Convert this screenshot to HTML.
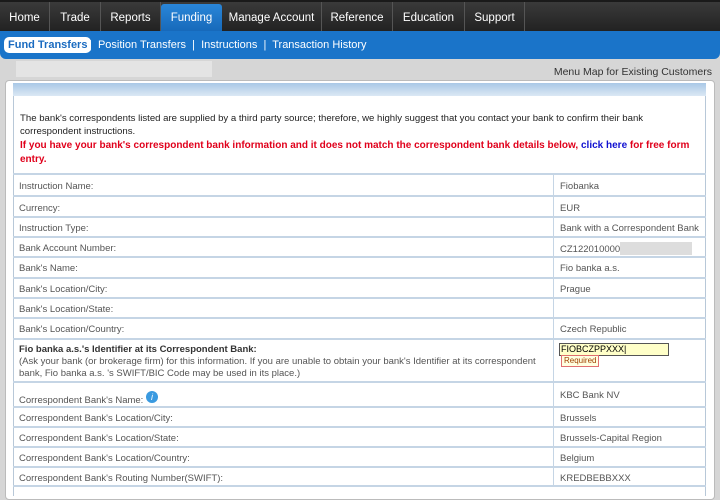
<!DOCTYPE html>
<html><head><style>
*{margin:0;padding:0;box-sizing:border-box}
body{width:720px;height:489px;overflow:hidden;background:#d6d6d6;font-family:"Liberation Sans",sans-serif;position:relative}
.nav{position:absolute;left:0;top:0;width:720px;height:31px;background:linear-gradient(#3a3a3a,#222);border-top:2px solid #1a1a1a}
.nav span{position:absolute;top:0;height:29px;line-height:32px;color:#fff;font-size:11.5px;border-right:1px solid #555;text-align:center}
.nav .on{background:linear-gradient(#2a86d8,#1567b8);border-radius:3px 3px 0 0;top:2px;height:29px;line-height:28px;border:none}
.sub{position:absolute;left:0;top:31px;width:720px;height:28px;background:#1a74c9;border-radius:0 0 6px 6px}
.sub .pill{position:absolute;left:4px;top:6px;height:16px;padding:0 4px;background:#fff;border-radius:5px;color:#1a6bc0;font-weight:bold;font-size:11px;line-height:16px}
.sub .l{position:absolute;top:8px;color:#fff;font-size:11px;white-space:pre}
.gray{position:absolute;left:16px;top:61px;width:196px;height:16px;background:#e4e4e4}
.mm{position:absolute;right:8px;top:66px;font-size:10.5px;color:#333}
.panel{position:absolute;left:5px;top:80px;width:710px;height:420px;background:#fff;border:1px solid #bbb;border-radius:4px}
.hdr{position:absolute;left:13px;top:83px;width:693px;height:13px;background:linear-gradient(#a9c8e6,#dbe8f4)}
.box{position:absolute;left:13px;top:96px;width:693px;height:400px;border-left:1px solid #b8c8d8;border-right:1px solid #b8c8d8}
.t1{position:absolute;left:20px;top:112px;font-size:9.6px;color:#222;line-height:13px;width:650px}
.t2{position:absolute;left:20px;top:139px;font-size:10px;color:#e0001b;font-weight:bold;line-height:14px;width:680px}
.t2 a{color:#1010d0;text-decoration:none}
.row{position:absolute;left:13px;width:693px;border-top:2px solid #c5d5e5;font-size:9.5px;color:#555;white-space:nowrap}
.row .a{position:absolute;left:6px}
.row .b{position:absolute;left:540px;top:0;bottom:0;border-left:1px solid #c5d5e5;padding-left:6px}
</style></head><body>
<div class="nav">
<span style="left:0;width:50px">Home</span>
<span style="left:50px;width:51px">Trade</span>
<span style="left:101px;width:60px">Reports</span>
<span class="on" style="left:161px;width:61px">Funding</span>
<span style="left:222px;width:100px">Manage Account</span>
<span style="left:322px;width:71px">Reference</span>
<span style="left:393px;width:72px">Education</span>
<span style="left:465px;width:60px">Support</span>
</div>
<div class="sub">
<div class="pill">Fund Transfers</div>
<div class="l" style="left:89px">|  Position Transfers  |  Instructions  |  Transaction History</div>
</div>
<div class="gray"></div>
<div class="mm">Menu Map for Existing Customers</div>
<div class="panel"></div>
<div class="hdr"></div>
<div class="box"></div>
<div class="t1">The bank's correspondents listed are supplied by a third party source; therefore, we highly suggest that you contact your bank to confirm their bank correspondent instructions.</div>
<div class="t2">If you have your bank's correspondent bank information and it does not match the correspondent bank details below, <a>click here</a> for free form entry.</div>

<div class="row" style="top:173px;height:22px"><span class="a" style="top:6px">Instruction Name:</span><span class="b" style="padding-top:6px">Fiobanka</span></div>
<div class="row" style="top:195px;height:21px"><span class="a" style="top:6px">Currency:</span><span class="b" style="padding-top:6px">EUR</span></div>
<div class="row" style="top:216px;height:20px"><span class="a" style="top:5px">Instruction Type:</span><span class="b" style="padding-top:5px">Bank with a Correspondent Bank</span></div>
<div class="row" style="top:236px;height:20px"><span class="a" style="top:5px">Bank Account Number:</span><span class="b" style="padding-top:4px">CZ122010000<span style="display:inline-block;width:72px;height:13px;background:#ddd;vertical-align:-3px"></span></span></div>
<div class="row" style="top:256px;height:21px"><span class="a" style="top:5px">Bank's Name:</span><span class="b" style="padding-top:5px">Fio banka a.s.</span></div>
<div class="row" style="top:277px;height:20px"><span class="a" style="top:5px">Bank's Location/City:</span><span class="b" style="padding-top:5px">Prague</span></div>
<div class="row" style="top:297px;height:20px"><span class="a" style="top:5px">Bank's Location/State:</span><span class="b"></span></div>
<div class="row" style="top:317px;height:21px"><span class="a" style="top:5px">Bank's Location/Country:</span><span class="b" style="padding-top:5px">Czech Republic</span></div>
<div class="row" style="top:338px;height:43px"><span class="a" style="top:4px;line-height:12px;width:520px;white-space:normal"><b style="color:#333">Fio banka a.s.'s Identifier at its Correspondent Bank:</b><br>(Ask your bank (or brokerage firm) for this information. If you are unable to obtain your bank's Identifier at its correspondent bank, Fio banka a.s. 's SWIFT/BIC Code may be used in its place.)</span><span class="b"><span style="position:absolute;left:5px;top:3px;width:110px;height:13px;background:#ffffc8;border:1px solid #555;font-size:9px;color:#000;padding-left:1px;line-height:11px">FIOBCZPPXXX|</span><span style="position:absolute;left:7px;top:15px;border:1px solid #e07070;background:#ffffe0;color:#a04000;font-size:8px;padding:0 2px;line-height:10px">Required</span></span></div>
<div class="row" style="top:381px;height:25px"><span class="a" style="top:8px">Correspondent Bank's Name: <span style="display:inline-block;width:12px;height:12px;border-radius:50%;background:#3a9ae0;color:#fff;font-size:9px;font-style:italic;text-align:center;line-height:12px;vertical-align:3px">i</span></span><span class="b" style="padding-top:7px">KBC Bank NV</span></div>
<div class="row" style="top:406px;height:20px"><span class="a" style="top:5px">Correspondent Bank's Location/City:</span><span class="b" style="padding-top:5px">Brussels</span></div>
<div class="row" style="top:426px;height:20px"><span class="a" style="top:5px">Correspondent Bank's Location/State:</span><span class="b" style="padding-top:5px">Brussels-Capital Region</span></div>
<div class="row" style="top:446px;height:20px"><span class="a" style="top:5px">Correspondent Bank's Location/Country:</span><span class="b" style="padding-top:5px">Belgium</span></div>
<div class="row" style="top:466px;height:21px;border-bottom:2px solid #c5d5e5"><span class="a" style="top:5px">Correspondent Bank's Routing Number(SWIFT):</span><span class="b" style="padding-top:5px">KREDBEBBXXX</span></div>
</body></html>
